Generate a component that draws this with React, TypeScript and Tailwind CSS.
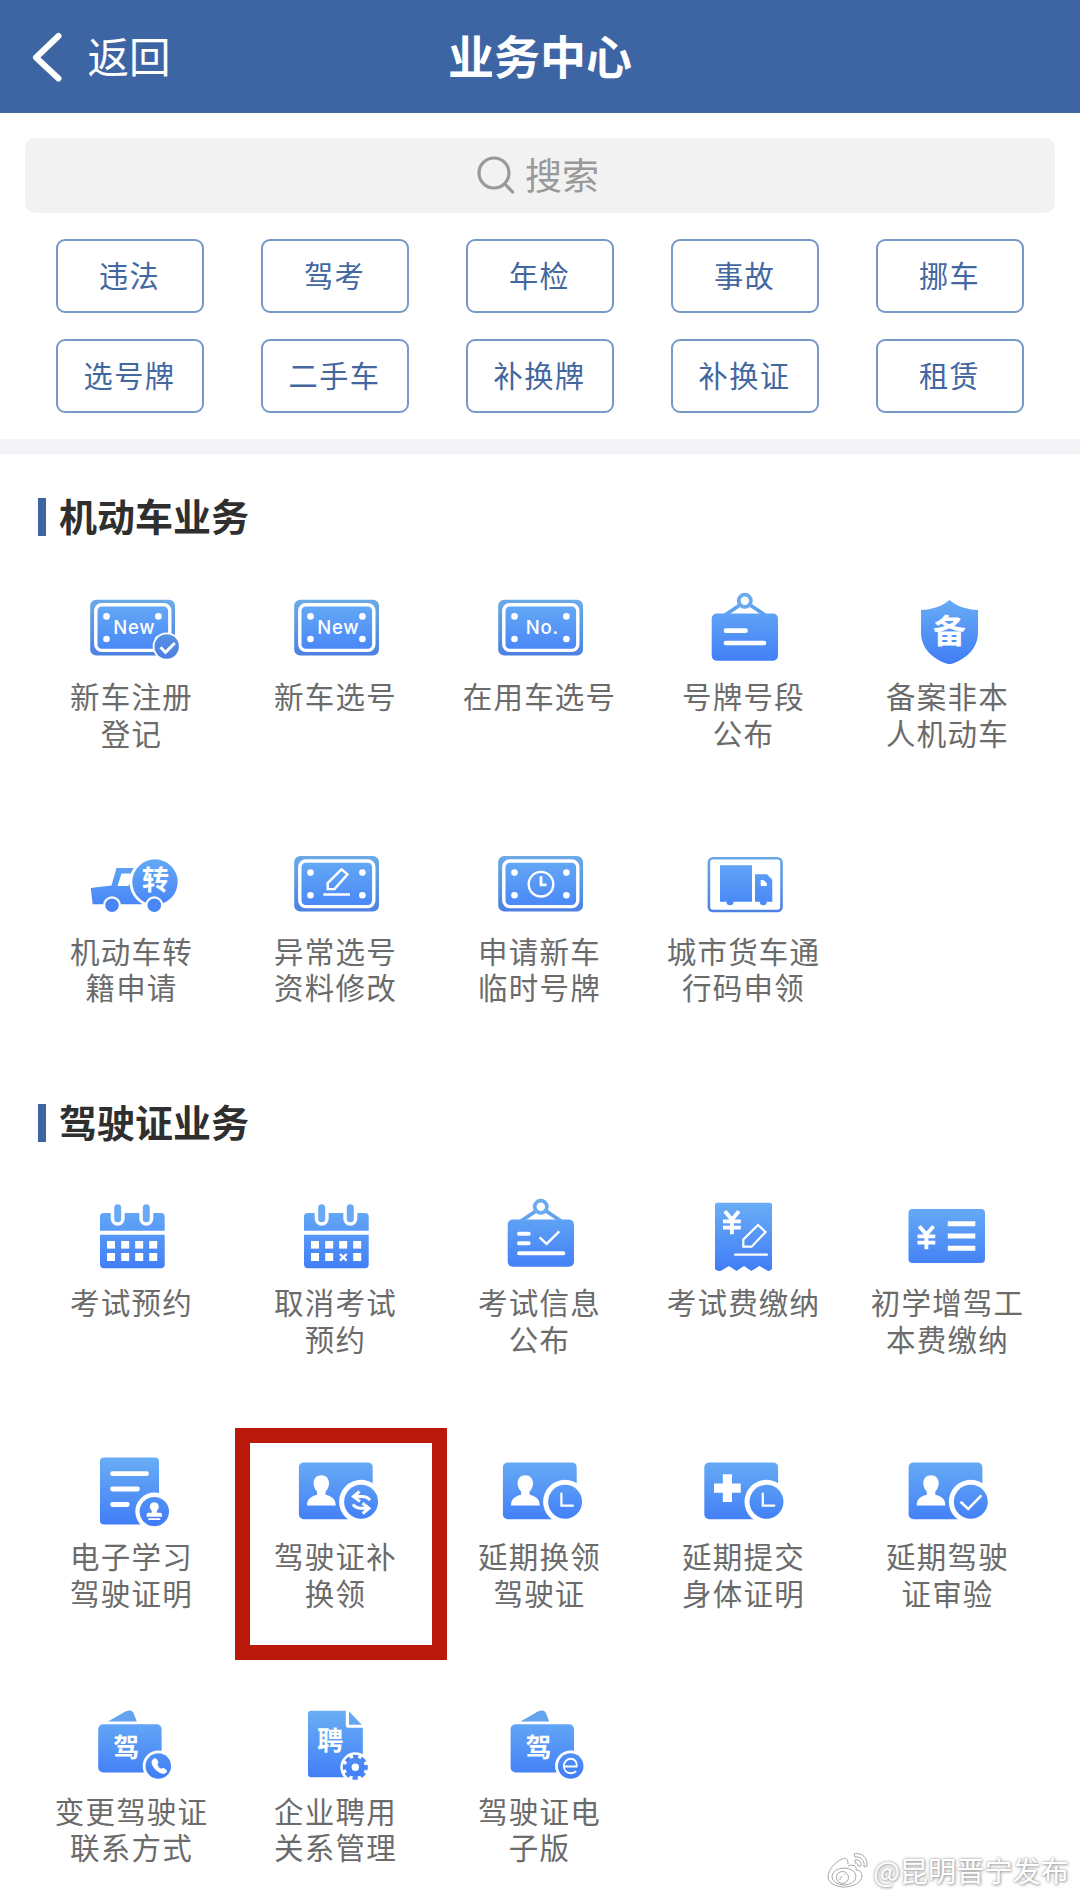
import { ReactNode } from 'react';

type Item = {
  label: string[];
  icon: ReactNode;
  highlight?: boolean;
};

const quickLinks = ['违法', '驾考', '年检', '事故', '挪车', '选号牌', '二手车', '补换牌', '补换证', '租赁'];

const BLUE = 'url(#blue)';

/* ---------- shared icon parts ---------- */

function Plate({ y = 0, children }: { y?: number; children?: ReactNode }) {
  return (
    <g transform={`translate(0 ${y})`}>
      <rect x="6.2" y="13.8" width="84.8" height="55.6" rx="6" fill="url(#rim)" />
      <rect x="11.8" y="18.8" width="74" height="45.6" rx="6" fill={BLUE} stroke="#fff" strokeWidth="3.4" />
      <circle cx="22.5" cy="30.4" r="3.3" fill="#fff" />
      <circle cx="74.4" cy="30.4" r="3.3" fill="#fff" />
      <circle cx="22.5" cy="53" r="3.3" fill="#fff" />
      <circle cx="74.4" cy="53" r="3.3" fill="#fff" />
      {children}
    </g>
  );
}

function PlateText({ children }: { children: string }) {
  return (
    <text x="50.3" y="48.2" textAnchor="middle" fill="#fff" fontSize="18.5" fontWeight="500" letterSpacing="0.8" fontFamily="Inter, sans-serif">
      {children}
    </text>
  );
}

function Glyph({ x, y, size, children }: { x: number; y: number; size: number; children: string }) {
  return (
    <text x={x} y={y} textAnchor="middle" fill="#fff" fontSize={size} fontWeight="700" fontFamily="'Noto Sans CJK SC', sans-serif">
      {children}
    </text>
  );
}

function Board({ children }: { children: ReactNode }) {
  return (
    <>
      <path d="M44 19 29 29M54 19l15 10" stroke="#62a3f0" strokeWidth="3.8" fill="none" />
      <circle cx="48.8" cy="14.8" r="6.1" fill="#fff" stroke="#69aaf0" strokeWidth="3.8" />
      <rect x="15.7" y="27.5" width="66.3" height="47.3" rx="5" fill={BLUE} />
      {children}
    </>
  );
}

function Calendar({ cancel = false }: { cancel?: boolean }) {
  const cols = [23, 37.2, 51.2, 65.2];
  return (
    <>
      <path d="M16 38.7V24.5a3.5 3.5 0 0 1 3.5-3.5h57.7a3.5 3.5 0 0 1 3.5 3.5v14.2z" fill={BLUE} />
      <path d="M16 42.7h64.7v29.6a4 4 0 0 1-4 4H20a4 4 0 0 1-4-4z" fill={BLUE} />
      {[33.7, 62.3].map((x) => (
        <g key={x} strokeLinecap="round">
          <path d={`M${x} 15.8V26.7`} stroke="#fff" strokeWidth="14" />
          <path d={`M${x} 15.8V26.7`} stroke="#6aaaf4" strokeWidth="7" />
        </g>
      ))}
      {cols.map((x, i) => (
        <g key={x} fill="#fff">
          <rect x={x} y="49" width="8" height="7.6" />
          {cancel && i === 2 ? (
            <path d="m52 62 6.6 6.6M58.6 62 52 68.6" stroke="#fff" strokeWidth="2.3" />
          ) : (
            <rect x={x} y="61" width="8" height="8" />
          )}
        </g>
      ))}
    </>
  );
}

function Card({ x = 0, mark, children }: { x?: number; mark: ReactNode; children: ReactNode }) {
  return (
    <g transform={`translate(${x} 0)`}>
      <rect x="10.9" y="16.4" width="73.8" height="56.8" rx="5" fill={BLUE} />
      {mark}
      <circle cx="73.1" cy="55.8" r="22" fill="#fff" />
      <circle cx="73.1" cy="55.8" r="17" fill={BLUE} />
      {children}
    </g>
  );
}

const person = (
  <path
    d="M33.3 29.3c4.8 0 7.7 3.3 7.7 8 0 3.8-1.5 6.3-3.4 8.2v3.3c5.5 1.6 10.1 3.4 10.1 10.6H19c0-7.2 4.6-9 10.1-10.6v-3.3c-2-1.9-3.5-4.4-3.5-8.2 0-4.7 2.9-8 7.7-8z"
    fill="#fff"
  />
);

const clockHands = <path d="M69.4 46.7v13h12.4" fill="none" stroke="#fff" strokeWidth="2.2" />;

function Wallet({ x = 0, children }: { x?: number; children: ReactNode }) {
  return (
    <g transform={`translate(${x} 0)`}>
      <path d="M24 20.4 40.5 10.9c5-2.5 7.8-1.9 9.3 1.8l3 7.7z" fill="#64a3ee" />
      <rect x="14.2" y="23.3" width="63.4" height="48.2" rx="5" fill={BLUE} />
      <Glyph x={42.2} y={56} size={26}>驾</Glyph>
      <circle cx="74.3" cy="65" r="15.6" fill="#fff" />
      <circle cx="74.3" cy="65" r="12.8" fill={BLUE} />
      {children}
    </g>
  );
}

/* ---------- menu data ---------- */

const vehicleItems: Item[] = [
  {
    label: ['新车注册', '登记'],
    icon: (
      <>
        <Plate><PlateText>New</PlateText></Plate>
        <circle cx="82.7" cy="60.5" r="14" fill="#fff" />
        <circle cx="82.7" cy="60.5" r="12.2" fill="url(#rim)" />
        <path d="m76.5 61.3 5 5 9.3-9.3" fill="none" stroke="#fff" strokeWidth="3" />
      </>
    ),
  },
  { label: ['新车选号'], icon: <Plate><PlateText>New</PlateText></Plate> },
  { label: ['在用车选号'], icon: <Plate><PlateText>No.</PlateText></Plate> },
  {
    label: ['号牌号段', '公布'],
    icon: (
      <Board>
        <path d="M30 44.7h19.6M30 57h38" stroke="#fff" strokeWidth="4.7" strokeLinecap="round" />
      </Board>
    ),
  },
  {
    label: ['备案非本', '人机动车'],
    icon: (
      <>
        <path d="M49.5 14C42 20.5 32 23.5 21 24v22.5C21 63 34 73.5 46.5 77.5q3 1 6 0C65 73.5 78 63 78 46.5V24c-11-.5-21-3.5-28.5-10z" fill={BLUE} />
        <Glyph x={49.5} y={56.8} size={33}>备</Glyph>
      </>
    ),
  },
  {
    label: ['机动车转', '籍申请'],
    icon: (
      <>
        <path d="M6.7 48 27.5 45.5 32.5 28H58v36.3H8.7z" fill={BLUE} />
        <path d="M37.5 33.5H52L44.5 46H33.5z" fill="#fff" />
        <circle cx="71" cy="42" r="25.5" fill="#fff" />
        <circle cx="71" cy="42" r="22.7" fill={BLUE} />
        <circle cx="28" cy="65.3" r="9" fill="#fff" />
        <circle cx="28" cy="65.3" r="6.8" fill="#4886f3" />
        <circle cx="70.3" cy="65.3" r="9" fill="#fff" />
        <circle cx="70.3" cy="65.3" r="6.8" fill="#4886f3" />
        <Glyph x={71.5} y={49.5} size={27}>转</Glyph>
      </>
    ),
  },
  {
    label: ['异常选号', '资料修改'],
    icon: (
      <Plate y={2.2}>
        <path d="M39.7 46.9v-6L53.5 27.1l6 5-13 14.8zM35.3 52.3H62" fill="none" stroke="#fff" strokeWidth="2.4" />
      </Plate>
    ),
  },
  {
    label: ['申请新车', '临时号牌'],
    icon: (
      <Plate y={2.2}>
        <circle cx="49" cy="42" r="12.3" fill="none" stroke="#fff" strokeWidth="2.4" />
        <path d="M49 34v8.6h5.5" fill="none" stroke="#fff" strokeWidth="2.8" />
      </Plate>
    ),
  },
  {
    label: ['城市货车通', '行码申领'],
    icon: (
      <>
        <rect x="12.9" y="18.2" width="72.6" height="52.8" rx="4" fill="none" stroke="url(#rim)" strokeWidth="2.6" />
        <path d="M24 25.3h32v36.4H37.5a3.5 3.5 0 0 1-7 0H24z" fill={BLUE} />
        <path d="M59 34.3h12l5.3 5.5v21.9h-5.5a3.5 3.5 0 0 1-7 0H59z" fill={BLUE} />
        <path d="M64.7 40h2.8l3.3 3.3V46h-6.1z" fill="#fff" />
      </>
    ),
  },
];

const licenseItems: Item[] = [
  { label: ['考试预约'], icon: <Calendar /> },
  { label: ['取消考试', '预约'], icon: <Calendar cancel /> },
  {
    label: ['考试信息', '公布'],
    icon: (
      <Board>
        <path d="M27 41.7h9.7M27 51.3h9.7M27 61.3h44.3" stroke="#fff" strokeWidth="4" strokeLinecap="round" />
        <path d="m47.6 45.3 7 6.5L67.3 39.3" fill="none" stroke="#fff" strokeWidth="2.4" />
      </Board>
    ),
  },
  {
    label: ['考试费缴纳'],
    icon: (
      <>
        <path d="M21 10.7h53q2 0 2 2V77q-3 3.5-5.5 1L63.3 74l-7.9 5-7.4-5-7.6 5-7.4-5-7.5 4.5Q21.5 80 19 77V12.7q0-2 2-2z" fill={BLUE} />
        <path d="m28.8 19.2 7.1 8.3 7.1-8.3M27 29.3h17.8M27 35.7h17.8M35.9 27v15.3" fill="none" stroke="#fff" strokeWidth="3.8" />
        <path d="M47.3 54.7v-7.2L62 33l7.6 7-14 14.7zM38.3 62.7h33.5" fill="none" stroke="#fff" strokeWidth="2.2" />
      </>
    ),
  },
  {
    label: ['初学增驾工', '本费缴纳'],
    icon: (
      <>
        <rect x="8.5" y="17" width="76.5" height="54" rx="4" fill={BLUE} />
        <path d="m19.3 34.2 7.1 8.3 7.1-8.3M17.5 44.3h17.8M17.5 50.7h17.8M26.4 42v15.3" fill="none" stroke="#fff" strokeWidth="3.8" />
        <path d="M47.8 31.7h27.5M47.8 44h27.5M47.8 56.3h27.5" stroke="#fff" strokeWidth="5" />
      </>
    ),
  },
  {
    label: ['电子学习', '驾驶证明'],
    icon: (
      <>
        <rect x="16" y="11.4" width="59" height="67" rx="4" fill={BLUE} />
        <path d="M28.5 27.7h34M28.5 43h25M28.5 58.5h14.8" stroke="#fff" strokeWidth="4.8" strokeLinecap="round" />
        <circle cx="70.3" cy="65.6" r="19" fill="#fff" />
        <circle cx="70.3" cy="65.6" r="14.7" fill={BLUE} />
        <path d="M70.3 56.3a4.6 4.6 0 0 1 2.6 8.3v2.2h3.3q1.8 0 1.8 1.8v2.2H62.6v-2.2q0-1.8 1.8-1.8h3.3v-2.2a4.6 4.6 0 0 1 2.6-8.3zM64.3 72.2h12v1.8h-12z" fill="#fff" />
      </>
    ),
  },
  {
    label: ['驾驶证补', '换领'],
    highlight: true,
    icon: (
      <Card mark={person}>
        <path d="m71.5 45.5-6 5 6.5 5M66 50.6h8q5.5 0 8 3.6M74.7 67.5l6.2-5.2-6.5-5M80.5 62.2H73q-5.5 0-8-3.8" fill="none" stroke="#fff" strokeWidth="3" />
      </Card>
    ),
  },
  { label: ['延期换领', '驾驶证'], icon: <Card mark={person}>{clockHands}</Card> },
  {
    label: ['延期提交', '身体证明'],
    icon: (
      <Card x={-2.6} mark={<path d="M34 28.3V56M20.6 42.2h26.8" stroke="#fff" strokeWidth="9.2" />}>
        {clockHands}
      </Card>
    ),
  },
  {
    label: ['延期驾驶', '证审验'],
    icon: (
      <Card x={-2.3} mark={person}>
        <path d="m62.9 55.7 7.6 7.3 13.2-13.6" fill="none" stroke="#fff" strokeWidth="2.6" />
      </Card>
    ),
  },
  {
    label: ['变更驾驶证', '联系方式'],
    icon: (
      <Wallet>
        <path d="M69.5 57.8c-3.5 2.3-1.8 7.1 1.8 10.7s8.7 6.1 11.5 2.5c.8-1.1-.1-2.3-2.8-3.7-1.5-.7-2 .9-3.2.3-1.7-.9-2.5-2-3.1-3.6-.4-1.2 1-1.6.5-3-.9-2.7-2.6-4.5-4.7-3.2z" fill="#fff" />
      </Wallet>
    ),
  },
  {
    label: ['企业聘用', '关系管理'],
    icon: (
      <>
        <path d="M23 9.7h34.8v14.5q0 2.5 2.5 2.5h14.5v49.6H23q-3 0-3-3V12.7q0-3 3-3z" fill={BLUE} />
        <path d="M61 10.5 73.8 23.7H61z" fill="#64a6f0" />
        <Glyph x={42.2} y={48.5} size={26}>聘</Glyph>
        <circle cx="67.3" cy="66.3" r="15" fill="#fff" />
        <circle cx="67.3" cy="66.3" r="9.8" fill={BLUE} />
        <circle cx="67.3" cy="66.3" r="10.7" fill="none" stroke="#4886f3" strokeWidth="3.6" strokeDasharray="5.2 3.204" strokeDashoffset="2.6" />
        <circle cx="67.3" cy="66.3" r="3.7" fill="#fff" />
      </>
    ),
  },
  {
    label: ['驾驶证电', '子版'],
    icon: (
      <Wallet x={4.4}>
        <path d="M68 65.5h12.2c.8-5-2.2-7.7-5.7-7.7-4 0-7 3-7 7.2 0 4.4 3 7.2 7 7.2 2.3 0 4-.7 5.2-2" fill="none" stroke="#fff" strokeWidth="1.9" />
      </Wallet>
    ),
  },
];

/* ---------- layout ---------- */

function MenuItem({ item }: { item: Item }) {
  return (
    <div className="relative flex h-[254.4px] flex-col items-center">
      <svg viewBox="0 0 96 92" className="-ml-[0.6px] h-[92px] w-[96px] shrink-0">{item.icon}</svg>
      <p className="mt-[2.2px] -ml-[1px] text-center font-['Liberation_Sans','Noto_Sans_CJK_SC',sans-serif] text-[29.5px] leading-[36.6px] tracking-[1.2px] whitespace-nowrap text-[#6b6b6b]">
        {item.label.map((line) => (
          <span key={line} className="block">{line}</span>
        ))}
      </p>
      {item.highlight && (
        <div className="absolute -top-[18.4px] left-px h-[232px] w-[212px] border-[15.6px] border-[#ba180a]" />
      )}
    </div>
  );
}

function Section({ title, items }: { title: string; items: Item[] }) {
  return (
    <section>
      <h2 className="ml-[38px] flex h-[38px] items-center gap-[13px] font-['Liberation_Sans','Noto_Sans_CJK_SC',sans-serif] text-[38px] leading-[38px] font-bold text-[#2f2f2f]">
        <span className="h-full w-2 bg-[#3d65a3]" />
        <span className="pt-[2px]">{title}</span>
      </h2>
      <div className="mt-[50px] grid grid-cols-5 px-[30px]">
        {items.map((item) => (
          <MenuItem key={item.label.join('')} item={item} />
        ))}
      </div>
    </section>
  );
}

export default function App() {
  return (
    <div className="relative h-[1898px] w-[1080px] overflow-hidden bg-white font-['Noto_Sans_CJK_SC',sans-serif]">
      <svg className="absolute h-0 w-0" aria-hidden="true">
        <defs>
          <linearGradient id="blue" gradientUnits="userSpaceOnUse" x1="0" y1="12" x2="0" y2="76">
            <stop offset="0" stopColor="#68adf5" />
            <stop offset="1" stopColor="#427ff7" />
          </linearGradient>
          <linearGradient id="rim" gradientUnits="userSpaceOnUse" x1="0" y1="12" x2="0" y2="74">
            <stop offset="0" stopColor="#6cabe6" />
            <stop offset="1" stopColor="#4a7ee2" />
          </linearGradient>
        </defs>
      </svg>

      {/* Top bar */}
      <header className="grid h-[113px] grid-cols-3 items-center bg-[#3d65a3] text-white">
        <div className="flex items-center pl-[32px] text-[41.5px] leading-[60px]">
          <svg viewBox="0 0 32 52" className="mr-[23.5px] h-[52px] w-[32px]" fill="none" stroke="currentColor" strokeWidth="6" strokeLinecap="round" strokeLinejoin="round">
            <path d="M26.5 5 4 26.5 26.5 47.5" />
          </svg>
          <span className="-mt-[4px]">返回</span>
        </div>
        <h1 className="-mt-[6px] text-center text-[46px] leading-[60px] font-bold">业务中心</h1>
      </header>

      {/* Search */}
      <div className="mx-[25px] mt-[25px] flex h-[75px] items-center justify-center gap-[9px] rounded-[10px] bg-[#f2f2f2] pr-[5px] pb-[2px] text-[37px] text-[#999]">
        <svg viewBox="0 0 40 40" className="h-10 w-10" fill="none" stroke="currentColor" strokeWidth="3.2">
          <circle cx="18" cy="18" r="15" />
          <path d="m28.5 28.5 9 9.5" />
        </svg>
        搜索
      </div>

      {/* Shortcuts */}
      <div className="mr-[56.5px] ml-[55.5px] mt-[26px] grid grid-cols-[repeat(5,148px)] justify-between gap-y-[26px]">
        {quickLinks.map((name) => (
          <button key={name} className="h-[74px] rounded-[9px] border-2 border-[#7799c8] pb-[3px] text-[29.2px] tracking-[1.4px] text-[#43679f]">
            {name}
          </button>
        ))}
      </div>

      <div className="mt-[26px] mb-[44px] h-[15px] bg-[#f3f3f8]" />

      <Section title="机动车业务" items={vehicleItems} />
      <div className="h-[9px]" />
      <Section title="驾驶证业务" items={licenseItems} />

      {/* Watermark */}
      <div className="absolute right-[11px] bottom-[7px] flex items-center gap-[4px] text-[28.2px] leading-[42px] text-white [text-shadow:0_0_3px_#999,1px_1px_3px_#aaa]">
        <svg viewBox="0 0 42 36" className="h-[36px] w-[42px]" fill="none" stroke="#a8a8a8" strokeWidth="1">
          <path d="M21 12c0-5-2-7-6-5C8 10 1 18 1 25c0 6 8 10 16 10 10 0 18-5 18-11 0-4-3-6-6-6 1-4-3-6-8-4" />
          <ellipse cx="17" cy="24.5" rx="12" ry="8.5" />
          <circle cx="15.5" cy="25.5" r="6" />
          <path d="M13 28c0-3 1-4 3-3m1-2 1-1M27 2c8-2 14 4 13 12l-3 1c1-6-3-11-9-10zM28 8c4-1 7 2 6 6l-3 0c0-2-1-3-3-3z" />
        </svg>
        @昆明晋宁发布
      </div>
    </div>
  );
}
